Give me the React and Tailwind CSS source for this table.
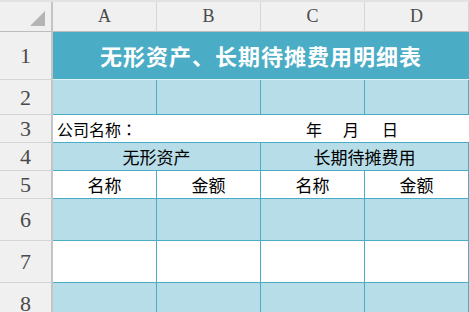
import React from 'react';

const serif = { fontFamily: '"Liberation Serif", "DejaVu Serif", serif' };
const cjk = { fontFamily: '"Noto Sans CJK SC", "Noto Sans", sans-serif' };
const cjkTc = { fontFamily: '"Noto Sans CJK TC", "Noto Sans CJK SC", sans-serif' };

function RowHead({ n }) {
  return (
    <div
      className="w-[53px] shrink-0 flex items-center justify-center bg-[#f0f0f0] border-r-2 border-b border-r-[#c4c4c4] border-b-[#d4d4d4] text-[22px] text-[#4a4a4a]"
      style={serif}
    >
      {n}
    </div>
  );
}

function Cell({ children, bg, className = '' }) {
  return (
    <div
      className={`w-[104px] shrink-0 flex items-center justify-center border-r border-b border-[#4bacc6] text-[17px] text-black ${bg} ${className}`}
    >
      {children}
    </div>
  );
}

function BlankRow({ n, h, bg }) {
  return (
    <div className={`flex ${h}`}>
      <RowHead n={n} />
      <Cell bg={bg} />
      <Cell bg={bg} />
      <Cell bg={bg} />
      <Cell bg={bg} />
    </div>
  );
}

export default function App() {
  const cols = ['A', 'B', 'C', 'D'];
  return (
    <div className="w-[469px] h-[312px] overflow-hidden bg-white" style={cjk}>
      {/* column headers */}
      <div className="flex h-[32px] bg-[#f0f0f0] border-t-2 border-[#e2e2e2]">
        <div className="w-[53px] shrink-0 relative border-r-2 border-b border-r-[#c4c4c4] border-b-[#bdbdbd]">
          <div className="absolute right-[6px] bottom-[5px] w-0 h-0 border-l-[15px] border-l-transparent border-b-[15px] border-b-[#b4b4b4]" />
        </div>
        {cols.map((c) => (
          <div
            key={c}
            className="w-[104px] shrink-0 flex items-center justify-center border-r border-b border-r-[#d6d6d6] border-b-[#bdbdbd] text-[18px] text-[#4a4a4a]"
            style={serif}
          >
            {c}
          </div>
        ))}
      </div>

      {/* row 1: title */}
      <div className="flex h-[48px]">
        <RowHead n="1" />
        <div className="w-[416px] shrink-0 flex items-center justify-center bg-[#4bacc6] border-b border-[#dff0f5] text-white font-bold text-[22px] tracking-[1px]">
          无形资产、长期待摊费用明细表
        </div>
      </div>

      <BlankRow n="2" h="h-[35px]" bg="bg-[#b7dde8]" />

      {/* row 3 */}
      <div className="flex h-[28px]">
        <RowHead n="3" />
        <div className="w-[416px] shrink-0 flex items-center bg-white border-b border-[#4bacc6] text-[16px] text-black">
          <span className="ml-[4px] w-[249px]">
            公司名称<span style={cjkTc}>：</span>
          </span>
          <span>年</span>
          <span className="ml-[21px]">月</span>
          <span className="ml-[23px]">日</span>
        </div>
      </div>

      {/* row 4 */}
      <div className="flex h-[28px]">
        <RowHead n="4" />
        <div className="w-[208px] shrink-0 flex items-center justify-center bg-[#b7dde8] border-r border-b border-[#4bacc6] text-[17px]">
          无形资产
        </div>
        <div className="w-[208px] shrink-0 flex items-center justify-center bg-[#b7dde8] border-r border-b border-[#4bacc6] text-[17px]">
          长期待摊费用
        </div>
      </div>

      {/* row 5 */}
      <div className="flex h-[28px]">
        <RowHead n="5" />
        <Cell bg="bg-white">名称</Cell>
        <Cell bg="bg-white">金额</Cell>
        <Cell bg="bg-white">名称</Cell>
        <Cell bg="bg-white">金额</Cell>
      </div>

      <BlankRow n="6" h="h-[42px]" bg="bg-[#b7dde8]" />
      <BlankRow n="7" h="h-[42px]" bg="bg-white" />
      <BlankRow n="8" h="h-[42px]" bg="bg-[#b7dde8]" />
    </div>
  );
}
